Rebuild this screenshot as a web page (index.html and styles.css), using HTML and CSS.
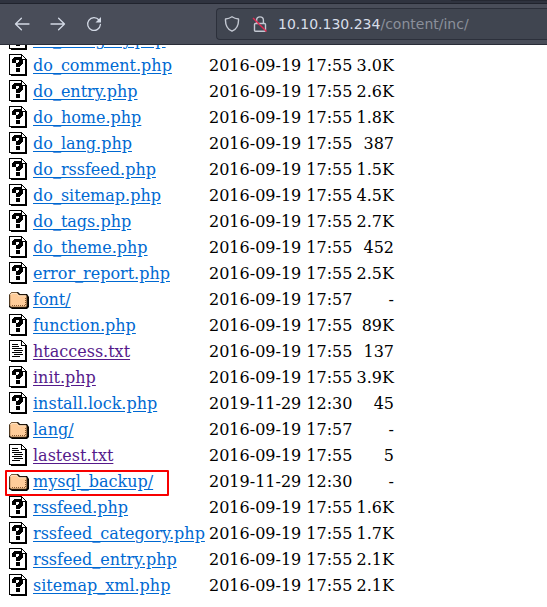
FILE: index.html
```
<!DOCTYPE html>
<html lang="en">
<head>
<meta charset="utf-8">
<title>Index of /content/inc</title>
<link rel="stylesheet" href="styles.css">
</head>
<body>
<svg class="defs" aria-hidden="true">
  <symbol id="page" viewBox="0 0 18 22" shape-rendering="crispEdges">
    <path fill="#000" d="M0 0h13v1h1v1h1v1h1v1h1v1h1v17H2v-1H0z"/>
    <path fill="#fff" d="M1 1h11v5h4v14H1z"/>
    <path fill="#fff" d="M13 2h1v1h1v1h1v1h-3z"/>
  </symbol>
  <symbol id="unknown" viewBox="0 0 18 22">
    <use href="#page" width="18" height="22"/>
    <path shape-rendering="crispEdges" fill="#000" d="M5 3h7v1h1v1h1v5h-1v1h-1v1h-1v1H7v-4h2V8h1V6H7v3H3V5h1V4h1zM7 14h4v4H7z"/>
  </symbol>
  <symbol id="text" viewBox="0 0 18 22">
    <use href="#page" width="18" height="22"/>
    <path shape-rendering="crispEdges" fill="#000" d="M3 4h6v1H3zM3 6h7v1H3zM3 8h10v1H3zM5 10h9v1H5zM3 12h10v1H3zM5 14h9v1H5zM3 16h8v1H3z"/>
  </symbol>
  <symbol id="folder" viewBox="0 0 20 22">
    <path fill="#000" d="M3 4h6l2 2h7l2 3v10l-2 2H3l-3-2V7z"/>
    <path fill="#fc9" stroke="#654321" stroke-width=".7" d="M.8 17.500V6.500l1.700-2h5.500l2 2.500h7l.8 1v10l-.8 1H2z"/>
    <path fill="none" stroke="#fff0dc" stroke-width=".7" d="M1.500 7l1.300-1.600h5l2 2.400h7"/>
    <path fill="none" stroke="#8a5a32" stroke-dasharray="1 1" d="M3 17.500h13.500V9.500"/>
  </symbol>
</svg>
<header class="chrome">
  <div class="tabs"><span class="tab"></span></div>
  <div class="toolbar">
    <svg class="nav" viewBox="0 0 16 16"><path d="M15 8H1.500M7.400 2.200 1.500 8l5.900 5.800"/></svg>
    <svg class="nav" viewBox="0 0 16 16"><path d="M1 8h13.500M8.600 2.200 14.500 8l-5.900 5.800"/></svg>
    <svg class="nav" viewBox="0 0 16 16"><path d="M13 4a6.400 6.400 0 1 0 1.400 4.500"/><path class="solid" d="M15 1v5.500H9.500z"/></svg>
    <div class="address">
      <svg class="shield" viewBox="0 0 16 16"><path d="M8 .8c2 1.400 4 2 6.500 2.200.3 5.600-1.500 10-6.500 12.200C3 13 1.200 8.600 1.500 3 4 2.800 6 2.200 8 .8z"/></svg>
      <svg class="lock" viewBox="0 0 16 16"><path d="M4.600 7.500V4.300a3.400 3.400 0 0 1 6.800 0v3.200M3.500 7.500h9q1 0 1 1v5.700q0 1-1 1h-9q-1 0-1-1V8.500q0-1 1-1z"/><path class="slash" d="M1 2l13.500 13.500"/></svg>
      <span class="url"><b>10.10.130.234</b>/content/inc/</span>
    </div>
  </div>
</header>
<main class="view">
  <div class="listing">
    <div class="row"><svg><use href="#unknown"/></svg><a href="#">do_category.php</a></div>
    <div class="row"><svg><use href="#unknown"/></svg><a href="#">do_comment.php</a><span>2016-09-19 17:55</span><span class="size">3.0K</span></div>
    <div class="row"><svg><use href="#unknown"/></svg><a href="#">do_entry.php</a><span>2016-09-19 17:55</span><span class="size">2.6K</span></div>
    <div class="row"><svg><use href="#unknown"/></svg><a href="#">do_home.php</a><span>2016-09-19 17:55</span><span class="size">1.8K</span></div>
    <div class="row"><svg><use href="#unknown"/></svg><a href="#">do_lang.php</a><span>2016-09-19 17:55</span><span class="size">387</span></div>
    <div class="row"><svg><use href="#unknown"/></svg><a href="#">do_rssfeed.php</a><span>2016-09-19 17:55</span><span class="size">1.5K</span></div>
    <div class="row"><svg><use href="#unknown"/></svg><a href="#">do_sitemap.php</a><span>2016-09-19 17:55</span><span class="size">4.5K</span></div>
    <div class="row"><svg><use href="#unknown"/></svg><a href="#">do_tags.php</a><span>2016-09-19 17:55</span><span class="size">2.7K</span></div>
    <div class="row"><svg><use href="#unknown"/></svg><a href="#">do_theme.php</a><span>2016-09-19 17:55</span><span class="size">452</span></div>
    <div class="row"><svg><use href="#unknown"/></svg><a href="#">error_report.php</a><span>2016-09-19 17:55</span><span class="size">2.5K</span></div>
    <div class="row"><svg class="dir"><use href="#folder"/></svg><a href="#">font/</a><span>2016-09-19 17:57</span><span class="size">-</span></div>
    <div class="row"><svg><use href="#unknown"/></svg><a href="#">function.php</a><span>2016-09-19 17:55</span><span class="size">89K</span></div>
    <div class="row"><svg><use href="#text"/></svg><a href="#" class="seen">htaccess.txt</a><span>2016-09-19 17:55</span><span class="size">137</span></div>
    <div class="row"><svg><use href="#unknown"/></svg><a href="#" class="seen">init.php</a><span>2016-09-19 17:55</span><span class="size">3.9K</span></div>
    <div class="row"><svg><use href="#unknown"/></svg><a href="#">install.lock.php</a><span>2019-11-29 12:30</span><span class="size">45</span></div>
    <div class="row"><svg class="dir"><use href="#folder"/></svg><a href="#">lang/</a><span>2016-09-19 17:57</span><span class="size">-</span></div>
    <div class="row"><svg><use href="#text"/></svg><a href="#" class="seen">lastest.txt</a><span>2016-09-19 17:55</span><span class="size">5</span></div>
    <div class="row marked"><svg class="dir"><use href="#folder"/></svg><a href="#">mysql_backup/</a><span>2019-11-29 12:30</span><span class="size">-</span></div>
    <div class="row"><svg><use href="#unknown"/></svg><a href="#">rssfeed.php</a><span>2016-09-19 17:55</span><span class="size">1.6K</span></div>
    <div class="row"><svg><use href="#unknown"/></svg><a href="#">rssfeed_category.php</a><span>2016-09-19 17:55</span><span class="size">1.7K</span></div>
    <div class="row"><svg><use href="#unknown"/></svg><a href="#">rssfeed_entry.php</a><span>2016-09-19 17:55</span><span class="size">2.1K</span></div>
    <div class="row"><svg><use href="#unknown"/></svg><a href="#">sitemap_xml.php</a><span>2016-09-19 17:55</span><span class="size">2.1K</span></div>
  </div>
</main>
</body>
</html>
```
FILE: styles.css
```
*, *::before { box-sizing: border-box; }
body { margin: 0; height: 607px; display: flex; flex-direction: column; overflow: hidden; background: #fff; }
.defs { display: none; }
.chrome { flex: 0 0 45px; display: flex; flex-direction: column; background: #494d59; border-bottom: 1px solid #292c37; }
.tabs { height: 4px; flex: none; display: flex; justify-content: flex-end; background: #2f333f; border-bottom: 1px solid #20232d; }
.tab { width: 96px; height: 1px; background: #252832; }
.toolbar { flex: 1; display: flex; align-items: center; padding-left: 14px; }
.nav { width: 16px; height: 16px; margin-right: 20px; fill: none; stroke: #d3d9e5; stroke-width: 1.3; stroke-linecap: round; stroke-linejoin: round; }
.nav .solid { fill: #d3d9e5; stroke: none; }
.address { flex: 1; height: 32px; margin-left: 94px; display: flex; align-items: center; background: #404550; border: 1px solid #2c303b; border-right: 0; border-radius: 4px 0 0 4px; padding-left: 7px; }
.address svg { width: 16px; height: 16px; fill: none; stroke: #c3c8d2; stroke-width: 1.4; stroke-linejoin: round; }
.address .lock { margin-left: 12px; }
.address .slash { stroke: #e22850; stroke-width: 1.4; }
.url { margin-left: 10px; font: 14px/20px "DejaVu Sans", sans-serif; color: #8b909b; white-space: pre; }
.url b { font-weight: 400; color: #d8dee9; }
.view { flex: 1; min-height: 0; overflow: hidden; }
.listing { margin-top: -18px; padding-left: 9px; font: 16px/26px "DejaVu Serif", serif; color: #000; }
.row { position: relative; display: grid; grid-template-columns: 24px 176px 144px 41px; height: 26px; white-space: nowrap; }
.row svg { width: 18px; height: 22px; margin-top: 1px; }
.row .dir { width: 20px; }
.row a { color: #0069d2; justify-self: start; text-underline-offset: 2px; }
.row a.seen { color: #551a8b; }
.size { text-align: right; }
.marked::before { content: ""; position: absolute; left: -4px; top: 1px; width: 164px; height: 26px; border: 2px solid #f80000; border-radius: 1px; }
```
